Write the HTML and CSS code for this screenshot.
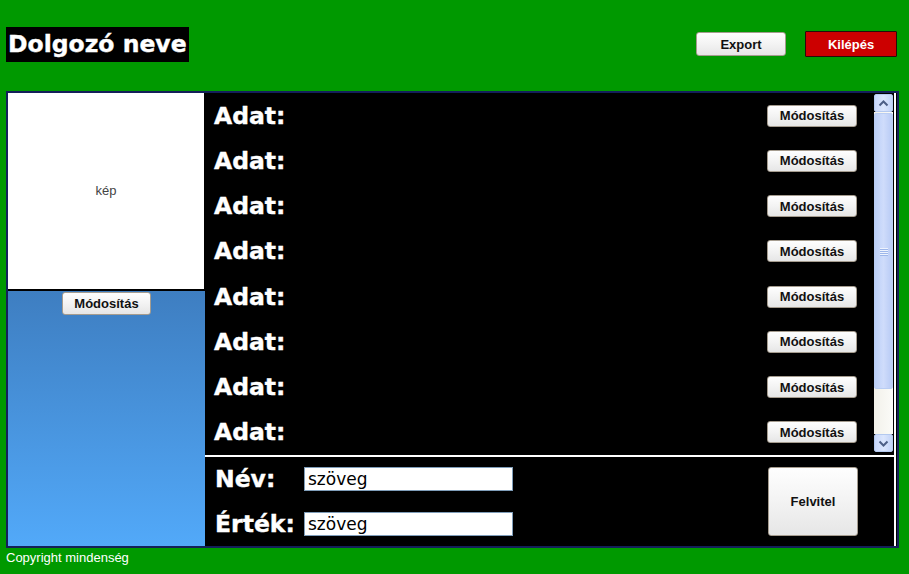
FILE: index.html
```html
<!DOCTYPE html>
<html lang="hu">
<head>
<meta charset="utf-8">
<title>Dolgozó</title>
<link rel="stylesheet" href="styles.css">
</head>
<body>
<header class="top">
  <h1 class="title">Dolgozó neve</h1>
  <div class="top-actions">
    <button class="btn btn-export">Export</button>
    <button class="btn btn-exit">Kilépés</button>
  </div>
</header>
<main class="main">
  <aside class="left">
    <div class="photo">kép</div>
    <div class="photo-panel"><button class="btn btn-photo">Módosítás</button></div>
  </aside>
  <section class="right">
    <div class="right-inner">
      <div class="list-zone">
        <ul class="list">
          <li class="row"><span class="label">Adat:</span><button class="btn btn-row">Módosítás</button></li>
          <li class="row"><span class="label">Adat:</span><button class="btn btn-row">Módosítás</button></li>
          <li class="row"><span class="label">Adat:</span><button class="btn btn-row">Módosítás</button></li>
          <li class="row"><span class="label">Adat:</span><button class="btn btn-row">Módosítás</button></li>
          <li class="row"><span class="label">Adat:</span><button class="btn btn-row">Módosítás</button></li>
          <li class="row"><span class="label">Adat:</span><button class="btn btn-row">Módosítás</button></li>
          <li class="row"><span class="label">Adat:</span><button class="btn btn-row">Módosítás</button></li>
          <li class="row"><span class="label">Adat:</span><button class="btn btn-row">Módosítás</button></li>
        </ul>
        <div class="scrollbar">
          <div class="sb-btn sb-up"><svg width="11" height="7" viewBox="0 0 11 7"><path d="M1.5 5.5 L5.5 1.5 L9.5 5.5" fill="none" stroke="#4d5f86" stroke-width="2"/></svg></div>
          <div class="sb-track">
            <div class="sb-thumb"><span class="grip"></span><span class="grip"></span><span class="grip"></span><span class="grip"></span></div>
          </div>
          <div class="sb-btn sb-down"><svg width="11" height="7" viewBox="0 0 11 7"><path d="M1.5 1.5 L5.5 5.5 L9.5 1.5" fill="none" stroke="#4d5f86" stroke-width="2"/></svg></div>
        </div>
      </div>
      <form class="form">
        <div class="fields">
          <div class="field"><label class="label flabel">Név:</label><input class="input" type="text" value="szöveg"></div>
          <div class="field"><label class="label flabel">Érték:</label><input class="input" type="text" value="szöveg"></div>
        </div>
        <button type="button" class="btn btn-add">Felvitel</button>
      </form>
    </div>
  </section>
</main>
<footer class="footer">Copyright mindenség</footer>
</body>
</html>
```
FILE: styles.css
```css
* { box-sizing: border-box; }
html, body { margin: 0; padding: 0; }
body {
  background: #009900;
  font-family: "Liberation Sans", Arial, sans-serif;
  width: 909px;
  height: 574px;
  overflow: hidden;
}
.top {
  display: flex;
  justify-content: space-between;
  align-items: flex-start;
  height: 91px;
  padding: 27px 12px 0 6px;
}
.title {
  margin: 0;
  background: #000;
  color: #fff;
  font-family: "DejaVu Sans", sans-serif;
  font-weight: bold;
  font-size: 23.5px;
  line-height: 35px;
  height: 35px;
  padding: 0 2px 0 2px;
  -webkit-text-stroke: 0.4px #fff;
}
.top-actions {
  display: flex;
  align-items: flex-start;
  gap: 19px;
  padding-top: 5px;
}
.btn {
  font-family: "Liberation Sans", Arial, sans-serif;
  font-weight: bold;
  font-size: 13px;
  color: #111;
  background: linear-gradient(#fefefe 0%, #f3f3f3 50%, #e6e6e6 100%);
  border: 1px solid #a59c8f;
  border-radius: 3px;
  padding: 0;
  cursor: pointer;
}
.btn-export { width: 90px; height: 24px; }
.btn-exit {
  width: 92px;
  height: 26px;
  margin-top: -1px;
  background: #cc0000;
  color: #fff;
  border: 1px solid #2a0a0a;
  border-radius: 1px;
}
.main {
  display: flex;
  margin-left: 6px;
  width: 893px;
  height: 457px;
  border: 2px solid #14205a;
  background: #000;
}
.left {
  width: 197px;
  display: flex;
  flex-direction: column;
}
.photo {
  width: 197px;
  height: 198px;
  background: #fff;
  border-right: 1px solid #000;
  border-bottom: 2px solid #000;
  display: flex;
  align-items: center;
  justify-content: center;
  font-size: 13px;
  color: #444;
  padding-bottom: 2px;
}
.photo-panel {
  flex: 1;
  background: linear-gradient(#3e7ec1, #52a9f9);
  display: flex;
  justify-content: center;
  align-items: flex-start;
  padding-top: 1px;
}
.btn-photo { width: 89px; height: 23px; }
.right {
  flex: 1;
  background: #000;
  padding-right: 1px;
}
.right-inner {
  height: 100%;
  border-right: 2px solid #fff;
  display: flex;
  flex-direction: column;
}
.list-zone {
  height: 364px;
  display: flex;
  border-bottom: 2px solid #fff;
}
.list {
  list-style: none;
  margin: 0;
  padding: 0;
  flex: 1;
  display: flex;
  flex-direction: column;
}
.row {
  flex: 1;
  display: flex;
  align-items: center;
  justify-content: space-between;
  padding: 0 17px 0 9px;
}
.label {
  color: #fff;
  font-family: "DejaVu Sans", sans-serif;
  font-weight: bold;
  font-size: 23.5px;
  -webkit-text-stroke: 0.4px #fff;
}
.btn-row { width: 90px; height: 22px; }
.scrollbar {
  width: 20px;
  display: flex;
  flex-direction: column;
  padding: 1px 1px 3px 0;
  background: #000;
}
.sb-btn {
  height: 18px;
  border: 1px solid #b4c9ef;
  border-radius: 2px;
  background: linear-gradient(90deg, #c7d7fb, #dbe6fd 50%, #c2d3f7);
  display: flex;
  align-items: center;
  justify-content: center;
}
.sb-track {
  flex: 1;
  background: linear-gradient(90deg, #f2f1ea, #fbfbf8);
  display: flex;
  flex-direction: column;
  padding-top: 1px;
}
.sb-thumb {
  height: 276px;
  border: 1px solid #b9cdf3;
  border-radius: 2px;
  background: linear-gradient(90deg, #bcd0f8, #cfdcfb 50%, #b8cbf5);
  display: flex;
  flex-direction: column;
  align-items: center;
  justify-content: center;
  gap: 1px;
}
.grip {
  width: 8px;
  height: 1px;
  background: #eef3fe;
  box-shadow: 0 1px 0 #9db6ea;
}
.form {
  flex: 1;
  margin: 0;
  display: flex;
  align-items: flex-start;
  justify-content: space-between;
  padding: 10px 36px 0 10px;
}
.fields {
  display: flex;
  flex-direction: column;
  gap: 21px;
}
.field {
  display: flex;
  align-items: center;
  height: 24px;
}
.flabel { width: 89px; }
.input {
  width: 209px;
  height: 24px;
  border: 1px solid #7f9db9;
  background: #fff;
  font-family: "DejaVu Sans", sans-serif;
  font-size: 17px;
  color: #000;
  padding: 0 3px;
  margin: 0;
}
.btn-add { width: 90px; height: 69px; }
.footer {
  color: #fff;
  font-size: 13px;
  padding: 2px 0 0 6px;
}
```
